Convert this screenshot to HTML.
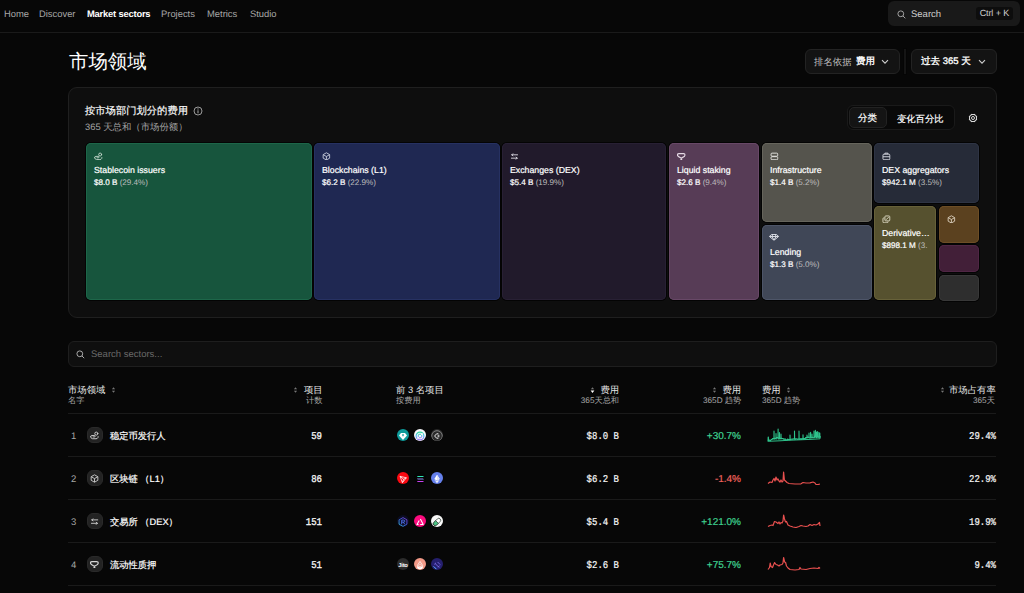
<!DOCTYPE html>
<html><head><meta charset="utf-8">
<style>
*{box-sizing:border-box;margin:0;padding:0}
html,body{text-rendering:geometricPrecision;width:1024px;height:593px;overflow:hidden;background:#070707;color:#e8e8e8;font-family:"Liberation Sans",sans-serif}
.abs{position:absolute}
.tx{position:absolute;white-space:nowrap}
.nav{position:absolute;left:0;top:0;width:1024px;height:33px;border-bottom:1px solid #1a1a1a;background:#070707}
.nav .tx{top:8.4px;font-size:9.4px;line-height:12px;color:#a8a8a8}
.nav .act{color:#fff;font-weight:bold;letter-spacing:-0.2px}
.sbox{position:absolute;left:888px;top:1px;width:132px;height:25px;border-radius:6px;background:#191919}
.kbd{position:absolute;left:87.6px;top:6.3px;width:37.6px;height:12.6px;border-radius:3px;background:#0d0d0d;font-size:9px;color:#d0d0d0;text-align:center;line-height:13.4px;letter-spacing:-0.1px}
.btn{position:absolute;top:49px;height:25px;border:1px solid #232323;border-radius:6px;background:#131313}
.card{position:absolute;left:68px;top:87px;width:929px;height:231px;border:1px solid #1f1f1f;border-radius:9px;background:#0e0e0e}
.t{position:absolute;border-radius:5px;overflow:hidden;box-shadow:0 0 0 1px #040404}
.t svg{position:absolute;left:8px;top:8.5px}
.t .nm{position:absolute;left:8px;top:22.1px;font-size:8.75px;line-height:11px;color:#fff;white-space:nowrap;-webkit-text-stroke:0.2px #fff}
.t .vl{position:absolute;left:8px;top:33.6px;font-size:8.1px;line-height:11px;color:#fff;white-space:nowrap;-webkit-text-stroke:0.2px #fff}
.t .vl i{font-style:normal;color:#bdbdbd;-webkit-text-stroke:0}
.search2{position:absolute;left:68px;top:341px;width:929px;height:26px;border:1px solid #1e1e1e;border-radius:6px;background:#0f0f0f}
.hd{position:absolute;font-size:9.35px;color:#e6e6e6;white-space:nowrap;line-height:11px}
.sub{position:absolute;font-size:8.2px;color:#a8a8a8;white-space:nowrap;line-height:10px}
.line{position:absolute;left:68px;width:928px;height:1px;background:#1a1a1a}
.num{position:absolute;left:71px;font-size:9.5px;color:#a6a6a6;line-height:11px}
.ibox{position:absolute;left:87px;width:16px;height:16px;border-radius:6px;background:#232323;border:1px solid #2a2a2a}
.ibox svg{position:absolute;left:2px;top:2.5px}
.nm2{position:absolute;left:110px;font-size:9.25px;color:#fff;-webkit-text-stroke:0.2px #fff;line-height:11px;white-space:nowrap}
.cnt{position:absolute;right:702px;font-family:"Liberation Mono",monospace;font-size:9px;color:#f4f4f4;line-height:11px;-webkit-text-stroke:0.3px #f4f4f4;transform:scaleY(1.15);transform-origin:50% 70%;margin-top:1.6px}
.lg{position:absolute;width:12.2px;height:12.2px;border-radius:50%;overflow:hidden}
.mono{font-family:"Liberation Mono",monospace}
.fee{position:absolute;right:405px;font-size:9px;color:#f4f4f4;line-height:11px;-webkit-text-stroke:0.2px #f4f4f4;transform:scaleY(1.15);transform-origin:50% 70%;margin-top:1.6px}
.chg{position:absolute;right:283px;font-size:10px;line-height:11px}
.up{color:#3fd291;-webkit-text-stroke:0.2px #3fd291}.dn{color:#f0635d;-webkit-text-stroke:0.2px #f0635d}
.sh{position:absolute;right:28px;font-size:9px;color:#f4f4f4;line-height:11px;-webkit-text-stroke:0.2px #f4f4f4;transform:scaleY(1.15);transform-origin:50% 70%;margin-top:1.6px}
.spark{position:absolute;left:766px}
</style></head><body>
<svg width="0" height="0" style="position:absolute">
<defs>
<symbol id="i-hand" viewBox="0.3 0 10 10"><g fill="none" stroke="currentColor" stroke-width="1" stroke-linecap="round" stroke-linejoin="round"><path d="M1 6.2 Q1 5 2.4 5 H5.1 Q6.1 5 6.1 5.8 Q6.1 6.6 5.1 6.6 H3.7"/><path d="M1 6.6 Q1.4 8.6 3.2 8.6 H7 Q8.4 8.6 9.1 7.4 L9.3 6.2"/><circle cx="7.3" cy="2.9" r="1.7"/></g></symbol>
<symbol id="i-cube" viewBox="0 0 10 10"><g fill="none" stroke="currentColor" stroke-width="0.95" stroke-linejoin="round"><path d="M5 0.9 L8.7 3 V7 L5 9.1 L1.3 7 V3 Z"/><path d="M1.5 3.1 L5 5.1 L8.5 3.1 M5 5.1 V9"/></g></symbol>
<symbol id="i-arrows" viewBox="0 0 10 10"><g fill="none" stroke="currentColor" stroke-width="1" stroke-linecap="round" stroke-linejoin="round"><path d="M8.6 3.2 H2 M3.2 2 L2 3.2 L3.2 4.4"/><path d="M1.6 7 H8.2 M7 5.8 L8.2 7 L7 8.2"/></g></symbol>
<symbol id="i-trophy" viewBox="0 0 10 10"><path d="M0.5 3.3 Q0.5 1.8 2.2 1.8 H7.4 Q9.2 1.8 9.2 3.3 Q9.2 5 6 6.4 L4.9 7 L3.8 6.4 Q0.5 5 0.5 3.3 Z" fill="none" stroke="currentColor" stroke-width="1.35" stroke-linejoin="round"/><path d="M3.5 9 L4.9 6.8 L6.3 9 Z" fill="currentColor"/></symbol>
<symbol id="i-server" viewBox="0 0 10 10"><g fill="none" stroke="currentColor" stroke-width="1.1"><rect x="1.2" y="1.3" width="7.6" height="3.5" rx="1.1"/><rect x="1.2" y="5.3" width="7.6" height="3.5" rx="1.1"/></g></symbol>
<symbol id="i-gem" viewBox="0 1.9 10 6.8"><g fill="none" stroke="currentColor" stroke-width="0.95" stroke-linejoin="round"><path d="M2.4 2.4 H7.6 L9.6 4.4 L5 8.2 L0.4 4.4 Z"/><path d="M0.6 4.4 H9.4 M3.6 2.4 L3 4.4 L5 8 L7 4.4 L6.4 2.4"/></g></symbol>
<symbol id="i-brief" viewBox="0 0 10 10"><g fill="none" stroke="currentColor" stroke-width="1.05"><path d="M3.3 2.4 V1.3 H6.7 V2.4"/><rect x="1.1" y="2.5" width="7.8" height="6.3" rx="1.1"/><path d="M1.2 5.4 H8.8"/></g></symbol>
<symbol id="i-copy" viewBox="0 0 10 10"><g fill="none" stroke="currentColor" stroke-width="1.05" stroke-linejoin="round"><rect x="3.3" y="1.1" width="5.6" height="5.6" rx="1"/><path d="M2.6 3.2 H2.2 Q1.1 3.2 1.1 4.3 V7.8 Q1.1 8.9 2.2 8.9 H5.7 Q6.8 8.9 6.8 7.8 V7.4"/><path d="M4.6 5.4 L7.6 2.4"/></g></symbol>
</defs></svg>
<div class="nav">
  <span class="tx" style="left:4px">Home</span>
  <span class="tx" style="left:39px">Discover</span>
  <span class="tx act" style="left:87px">Market sectors</span>
  <span class="tx" style="left:161px">Projects</span>
  <span class="tx" style="left:207px">Metrics</span>
  <span class="tx" style="left:250px">Studio</span>
  <div class="sbox">
    <svg class="abs" style="left:9px;top:9px" width="9" height="9" viewBox="0 0 9 9"><circle cx="3.8" cy="3.8" r="2.9" fill="none" stroke="#a8a8a8" stroke-width="0.95"/><path d="M6 6 L8.3 8.3" stroke="#a8a8a8" stroke-width="0.95"/></svg>
    <span class="tx" style="left:23px;top:8px;color:#d0d0d0;font-size:9.5px;line-height:12px">Search</span>
    <div class="kbd">Ctrl + K</div>
  </div>
</div>

<div class="tx" style="left:69px;top:49px;font-size:19.4px;color:#fff;line-height:26px">市场领域</div>

<div class="btn" style="left:805px;width:95px"></div>
<span class="tx" style="left:814px;top:55.5px;font-size:9.4px;line-height:12px;color:#c4c4c4">排名依据</span>
<span class="tx" style="left:856px;top:55.5px;font-size:9.5px;line-height:12px;color:#fff;-webkit-text-stroke:0.35px #fff">费用</span>
<svg class="abs" style="left:881px;top:59px" width="8" height="6" viewBox="0 0 8 6"><path d="M1 1.2 L4 4.2 L7 1.2" fill="none" stroke="#cfcfcf" stroke-width="1.1"/></svg>
<div class="abs" style="left:904px;top:49px;width:2px;height:25px;background:#151515;box-shadow:0 0 0 1px #050505"></div>
<div class="btn" style="left:911px;width:86px"></div>
<span class="tx" style="left:921px;top:55.5px;font-size:9.5px;line-height:12px;color:#fff;-webkit-text-stroke:0.35px #fff">过去 365 天</span>
<svg class="abs" style="left:978px;top:59px" width="8" height="6" viewBox="0 0 8 6"><path d="M1 1.2 L4 4.2 L7 1.2" fill="none" stroke="#cfcfcf" stroke-width="1.1"/></svg>

<div class="card"></div>
<span class="tx" style="left:85px;top:106px;font-size:10.3px;line-height:12px;color:#fff;-webkit-text-stroke:0.15px #fff">按市场部门划分的费用</span>
<svg class="abs" style="left:193px;top:106px" width="10" height="10" viewBox="0 0 10 10"><circle cx="5" cy="5" r="4" fill="none" stroke="#a8a8a8" stroke-width="0.9"/><path d="M5 4.3 V7.3" stroke="#a8a8a8" stroke-width="1"/><circle cx="5" cy="2.9" r="0.6" fill="#a8a8a8"/></svg>
<span class="tx" style="left:85px;top:120.5px;font-size:9.4px;line-height:12px;color:#a4a4a4">365 天总和（市场份额）</span>

<div class="abs" style="left:847px;top:105px;width:108px;height:25px;border-radius:6px;background:#090909;border:1px solid #1a1a1a"></div>
<div class="abs" style="left:849px;top:107px;width:38px;height:21px;border-radius:5px;background:#141414;border:1px solid #222"></div>
<span class="tx" style="left:858px;top:112.8px;font-size:9.5px;line-height:12px;color:#fff;-webkit-text-stroke:0.2px #fff">分类</span>
<span class="tx" style="left:897px;top:112.8px;font-size:9.3px;line-height:12px;color:#fff;-webkit-text-stroke:0.2px #fff">变化百分比</span>
<svg class="abs" style="left:967.6px;top:112.8px" width="10" height="10" viewBox="0 0 10 10"><polygon points="8.60,6.49 7.40,7.40 6.49,8.60 5.00,8.40 3.51,8.60 2.60,7.40 1.40,6.49 1.60,5.00 1.40,3.51 2.60,2.60 3.51,1.40 5.00,1.60 6.49,1.40 7.40,2.60 8.60,3.51 8.40,5.00" fill="none" stroke="#d8d8d8" stroke-width="1.05" stroke-linejoin="round"/><circle cx="5" cy="5" r="1.5" fill="none" stroke="#d8d8d8" stroke-width="1"/></svg>

<!-- treemap -->
<div class="t" style="left:86px;top:143px;width:226px;height:157px;background:#17553d;box-shadow:inset 0 0 0 1px #1d6649,0 0 0 1px #040404">
  <svg width="8.8" height="8.8" style="color:#c9dcd0"><use href="#i-hand"/></svg>
  <div class="nm">Stablecoin issuers</div><div class="vl">$8.0 B <i>(29.4%)</i></div>
</div>
<div class="t" style="left:314px;top:143px;width:186px;height:157px;background:#1f2852;box-shadow:inset 0 0 0 1px #263162,0 0 0 1px #040404">
  <svg width="8.8" height="8.8" style="color:#d4d8e6"><use href="#i-cube"/></svg>
  <div class="nm">Blockchains (L1)</div><div class="vl">$6.2 B <i>(22.9%)</i></div>
</div>
<div class="t" style="left:502px;top:143px;width:164px;height:157px;background:#211a2b;box-shadow:inset 0 0 0 1px #282034,0 0 0 1px #040404">
  <svg width="8.8" height="8.8" style="color:#e4e2ea"><use href="#i-arrows"/></svg>
  <div class="nm">Exchanges (DEX)</div><div class="vl">$5.4 B <i>(19.9%)</i></div>
</div>
<div class="t" style="left:669px;top:143px;width:90px;height:157px;background:#573c56;box-shadow:inset 0 0 0 1px #684867,0 0 0 1px #040404">
  <svg width="8.8" height="8.8" style="color:#e4d8e3"><use href="#i-trophy"/></svg>
  <div class="nm">Liquid staking</div><div class="vl">$2.6 B <i>(9.4%)</i></div>
</div>
<div class="t" style="left:762px;top:143px;width:110px;height:79px;background:#55544d;box-shadow:inset 0 0 0 1px #66655c,0 0 0 1px #040404">
  <svg width="8.8" height="8.8" style="color:#e2e2de"><use href="#i-server"/></svg>
  <div class="nm">Infrastructure</div><div class="vl">$1.4 B <i>(5.2%)</i></div>
</div>
<div class="t" style="left:762px;top:225px;width:110px;height:75px;background:#404757;box-shadow:inset 0 0 0 1px #4d5568,0 0 0 1px #040404">
  <svg width="10" height="6.8" style="color:#dde0e8;left:7.4px;top:9.4px"><use href="#i-gem"/></svg>
  <div class="nm">Lending</div><div class="vl">$1.3 B <i>(5.0%)</i></div>
</div>
<div class="t" style="left:874px;top:143px;width:105px;height:60px;background:#262b38;box-shadow:inset 0 0 0 1px #2e3444,0 0 0 1px #040404">
  <svg width="8.8" height="8.8" style="color:#d8dae2"><use href="#i-brief"/></svg>
  <div class="nm">DEX aggregators</div><div class="vl">$942.1 M <i>(3.5%)</i></div>
</div>
<div class="t" style="left:874px;top:206px;width:62px;height:94px;background:#56512f;box-shadow:inset 0 0 0 1px #676139,0 0 0 1px #040404">
  <svg width="8.8" height="8.8" style="color:#dedbc6"><use href="#i-copy"/></svg>
  <div class="nm">Derivative…</div><div class="vl">$898.1 M <i>(3.</i></div>
</div>
<div class="t" style="left:939px;top:206px;width:40px;height:37px;background:#5b411f;box-shadow:inset 0 0 0 1px #6d4e26,0 0 0 1px #040404">
  <svg width="8.8" height="8.8" style="color:#e6dccb"><use href="#i-cube"/></svg>
</div>
<div class="t" style="left:939px;top:245px;width:40px;height:27px;background:#421f38;box-shadow:inset 0 0 0 1px #4f2644,0 0 0 1px #040404"></div>
<div class="t" style="left:939px;top:275px;width:40px;height:26px;background:#2e2e2e;box-shadow:inset 0 0 0 1px #383838,0 0 0 1px #040404"></div>

<div class="search2"></div>
<svg class="abs" style="left:76px;top:350px" width="9" height="9" viewBox="0 0 9 9"><circle cx="3.8" cy="3.8" r="2.9" fill="none" stroke="#b0b0b0" stroke-width="0.95"/><path d="M6 6 L8.2 8.2" stroke="#b0b0b0" stroke-width="0.95"/></svg>
<span class="tx" style="left:91px;top:348.6px;font-size:9.5px;line-height:12px;color:#6a6a6a">Search sectors...</span>

<!-- table header -->
<div class="hd" style="left:68px;top:385px">市场领域</div>
<svg class="abs" style="left:111px;top:386px" width="5" height="8" viewBox="0 0 5 8"><path d="M0.9 3.2 L2.5 1.3 L4.1 3.2 Z M0.9 4.8 L2.5 6.7 L4.1 4.8 Z" fill="#777"/></svg>
<div class="sub" style="left:68px;top:396px">名字</div>
<svg class="abs" style="left:293px;top:386px" width="5" height="8" viewBox="0 0 5 8"><path d="M0.9 3.2 L2.5 1.3 L4.1 3.2 Z M0.9 4.8 L2.5 6.7 L4.1 4.8 Z" fill="#777"/></svg>
<div class="hd" style="left:304px;top:385px">项目</div>
<div class="sub" style="left:306px;top:396px">计数</div>
<div class="hd" style="left:396px;top:385px">前 3 名项目</div>
<div class="sub" style="left:396px;top:396px">按费用</div>
<svg class="abs" style="left:590px;top:386px" width="5" height="8" viewBox="0 0 5 8"><path d="M0.9 3.2 L2.5 1.3 L4.1 3.2 Z" fill="#777"/><path d="M0.6 4.6 L2.5 6.9 L4.4 4.6 Z" fill="#fff"/></svg>
<div class="hd" style="left:600.5px;top:385px">费用</div>
<div class="sub" style="left:580.8px;top:396px">365天总和</div>
<svg class="abs" style="left:712px;top:386px" width="5" height="8" viewBox="0 0 5 8"><path d="M0.9 3.2 L2.5 1.3 L4.1 3.2 Z M0.9 4.8 L2.5 6.7 L4.1 4.8 Z" fill="#777"/></svg>
<div class="hd" style="left:722.5px;top:385px">费用</div>
<div class="sub" style="left:703px;top:396px">365D 趋势</div>
<div class="hd" style="left:762px;top:385px">费用</div>
<svg class="abs" style="left:786px;top:386px" width="5" height="8" viewBox="0 0 5 8"><path d="M0.9 3.2 L2.5 1.3 L4.1 3.2 Z M0.9 4.8 L2.5 6.7 L4.1 4.8 Z" fill="#777"/></svg>
<div class="sub" style="left:762px;top:396px">365D 趋势</div>
<svg class="abs" style="left:940px;top:386px" width="5" height="8" viewBox="0 0 5 8"><path d="M0.9 3.2 L2.5 1.3 L4.1 3.2 Z M0.9 4.8 L2.5 6.7 L4.1 4.8 Z" fill="#777"/></svg>
<div class="hd" style="left:949px;top:385px">市场占有率</div>
<div class="sub" style="left:973px;top:396px">365天</div>
<div class="line" style="top:413px"></div>

<!-- row 1 -->
<div class="num" style="top:430.5px">1</div>
<div class="ibox" style="top:427px"><svg width="9" height="9" style="color:#d6d6d6"><use href="#i-hand"/></svg></div>
<div class="nm2" style="top:430.5px">稳定币发行人</div>
<div class="cnt" style="top:430.5px">59</div>
<div class="lg" style="left:397px;top:429px;background:#0e9b9b"><svg width="12" height="12" viewBox="0 0 12 12"><path d="M4 3.1 H8 L10 5.5 L6 9.9 L2 5.5 Z" fill="#fff"/><path d="M4.9 4.6 L6 3.9 L7.1 4.6 L6.6 6.2 H5.4 Z" fill="#0e9b9b" opacity="0.8"/></svg></div>
<div class="lg" style="left:414px;top:429px;background:#f7f7fa"><svg width="12" height="12" viewBox="0 0 12 12"><defs><linearGradient id="cg" x1="0" y1="0" x2="0" y2="1"><stop offset="0" stop-color="#2fd9a0"/><stop offset="0.5" stop-color="#4fb6f5"/><stop offset="1" stop-color="#a67af4"/></linearGradient></defs><circle cx="6" cy="6" r="3.9" fill="none" stroke="url(#cg)" stroke-width="1.2"/><circle cx="6" cy="6" r="1.9" fill="none" stroke="url(#cg)" stroke-width="1"/><path d="M3.4 8.6 L8.6 3.4" stroke="#f7f7fa" stroke-width="0.9"/></svg></div>
<div class="lg" style="left:431px;top:429px;background:#2a2a2a"><svg width="12" height="12" viewBox="0 0 12 12"><circle cx="6" cy="6" r="5.3" fill="none" stroke="#8a8a8a" stroke-width="0.9"/><path d="M7.4 3.8 H5.6 L3.6 6 L5.6 8.2 H7.4" fill="none" stroke="#fff" stroke-width="0.9"/><path d="M6.6 5.3 H8.4 M6.6 6.7 H8.4" stroke="#fff" stroke-width="0.8"/></svg></div>
<div class="fee mono" style="top:430.5px">$8.0 B</div>
<div class="chg up" style="top:430.5px">+30.7%</div>
<svg class="spark" style="top:426px" width="56" height="16" viewBox="766 426 56 16"><polyline fill="none" stroke="#2ec38b" stroke-width="1.1" stroke-linejoin="round" points="767.50,440.56 768.00,440.24 768.05,440.24 768.20,437.00 768.35,437.00 768.50,440.39 769.00,440.14 769.50,440.10 770.00,440.64 770.50,440.67 771.00,439.83 771.50,439.53 772.00,439.42 772.50,438.51 773.00,438.90 773.50,438.39 773.85,438.39 774.00,438.61 774.00,431.00 774.15,439.25 774.50,438.31 775.00,438.65 775.50,438.03 775.85,438.03 776.00,437.65 776.00,433.50 776.15,439.17 776.50,437.86 777.00,437.50 777.50,437.67 777.95,437.67 778.00,438.38 778.10,429.00 778.25,439.09 778.50,437.79 779.00,438.06 779.35,438.06 779.50,438.45 779.50,432.50 779.65,439.04 780.00,438.83 780.50,438.10 780.85,438.10 781.00,438.59 781.00,434.00 781.15,438.98 781.50,438.45 782.00,438.39 782.50,438.66 783.00,438.56 783.50,439.19 784.00,438.88 784.50,439.34 785.00,438.96 785.50,439.12 786.00,440.00 786.50,439.94 787.00,439.84 787.50,439.08 788.00,439.59 788.50,439.38 789.00,439.68 789.50,439.46 789.85,439.46 790.00,439.56 790.00,435.00 790.15,438.64 790.50,439.58 791.00,439.32 791.50,439.30 792.00,438.97 792.50,439.17 793.00,438.90 793.50,438.96 794.00,438.80 794.35,438.80 794.50,439.10 794.50,431.00 794.65,438.47 795.00,439.59 795.50,438.88 796.00,438.75 796.50,438.79 797.00,439.11 797.50,438.95 798.00,439.43 798.50,438.79 798.85,438.79 799.00,439.03 799.00,431.00 799.15,438.30 799.50,439.30 800.00,439.50 800.50,438.69 801.00,438.54 801.50,439.42 802.00,438.69 802.50,439.06 802.85,439.06 803.00,439.30 803.00,434.70 803.15,438.15 803.50,439.14 804.00,438.65 804.50,438.52 805.00,439.33 805.50,437.54 806.00,438.09 806.50,437.40 806.85,437.40 807.00,437.77 807.00,435.00 807.15,438.00 807.50,437.20 808.00,437.08 808.50,437.54 808.85,437.54 809.00,437.03 809.00,433.00 809.15,437.92 809.50,437.70 810.00,437.91 810.45,437.91 810.50,437.37 810.60,432.30 810.75,437.86 811.00,437.92 811.50,437.73 811.85,437.73 812.00,437.50 812.00,434.00 812.15,437.81 812.50,437.28 813.00,437.72 813.50,437.81 813.85,437.81 814.00,436.97 814.00,431.00 814.15,437.73 814.50,437.50 815.00,436.84 815.25,436.84 815.40,430.30 815.50,436.88 815.55,436.88 816.00,437.38 816.35,437.38 816.50,437.28 816.50,432.00 816.65,437.63 817.00,437.20 817.25,437.20 817.40,431.50 817.50,437.06 817.55,437.06 818.00,437.09 818.50,437.11 818.65,437.11 818.80,432.30 818.95,437.55 819.00,437.03 819.50,436.69 819.65,436.69 819.80,433.00 819.95,437.51 820.00,437.10"/><polyline fill="none" stroke="#2ec38b" stroke-width="1" points="767.6,441.3 780,440.8 790,440.2 800,439.8 810,439.4 820,438.8 820.2,436"/></svg>
<div class="sh mono" style="top:430.5px">29.4%</div>
<div class="line" style="top:456px"></div>

<!-- row 2 -->
<div class="num" style="top:473.5px">2</div>
<div class="ibox" style="top:470px"><svg width="9" height="9" style="color:#d6d6d6"><use href="#i-cube"/></svg></div>
<div class="nm2" style="top:473.5px">区块链 （L1）</div>
<div class="cnt" style="top:473.5px">86</div>
<div class="lg" style="left:397px;top:472px;background:#fb0a12"><svg width="12" height="12" viewBox="0 0 12 12"><path d="M3 3.3 L9.4 4.8 L5.4 9.6 Z M3 3.3 L6.6 6.2 L9.4 4.8 M6.6 6.2 L5.4 9.6" fill="none" stroke="#fff" stroke-width="0.75" stroke-linejoin="round"/></svg></div>
<div class="lg" style="left:414px;top:472px;background:#050505"><svg width="12" height="12" viewBox="0 0 12 12"><defs><linearGradient id="sg" x1="0" y1="0" x2="0" y2="1"><stop offset="0" stop-color="#28e0b0"/><stop offset="0.5" stop-color="#8a7cf0"/><stop offset="1" stop-color="#c63cf0"/></linearGradient></defs><path d="M3.8 3.1 H10 L9 4.1 H2.8 Z" fill="#2ee6b6"/><path d="M2.8 5.6 H9 L10 6.6 H3.8 Z" fill="#8c8cf2"/><path d="M3.8 8.1 H10 L9 9.1 H2.8 Z" fill="#c840f2"/></svg></div>
<div class="lg" style="left:431px;top:472px;background:#6580ec"><svg width="12" height="12" viewBox="0 0 12 12"><path d="M6 1.8 L8.7 6.1 L6 7.7 L3.3 6.1 Z" fill="#fff"/><path d="M3.3 6.7 L6 8.3 L8.7 6.7 L6 10.3 Z" fill="#fff" opacity="0.9"/><path d="M6 1.8 V7.7 L8.7 6.1 Z" fill="#dfe4fb"/></svg></div>
<div class="fee mono" style="top:473.5px">$6.2 B</div>
<div class="chg dn" style="top:473.5px">-1.4%</div>
<svg class="spark" style="top:469px" width="56" height="16" viewBox="766 469 56 16"><polyline fill="none" stroke="#e8504f" stroke-width="1.2" stroke-linejoin="round" points="768,483.5 770,482 772,482.5 773,480 774,478.5 775,481 776,477 777,480 778,479 779,481 780,482 781,480 782,482 783,481 783.6,472 784.4,480 785.5,481 787,482.5 789,483.5 795,484 801,483.8 803,482.5 806,483 810,482.8 813,482 815,483 816,484.5 818,484.5 820,484"/></svg>
<div class="sh mono" style="top:473.5px">22.9%</div>
<div class="line" style="top:499px"></div>

<!-- row 3 -->
<div class="num" style="top:516.5px">3</div>
<div class="ibox" style="top:513px"><svg width="9" height="9" style="color:#d6d6d6"><use href="#i-arrows"/></svg></div>
<div class="nm2" style="top:516.5px">交易所 （DEX）</div>
<div class="cnt" style="top:516.5px">151</div>
<div class="lg" style="left:397px;top:515px;background:#0c0d22"><svg width="12" height="12" viewBox="0 0 12 12"><defs><linearGradient id="rg" x1="0" y1="1" x2="1" y2="0"><stop offset="0" stop-color="#35c4d8"/><stop offset="0.5" stop-color="#3b5ce0"/><stop offset="1" stop-color="#8a3ee0"/></linearGradient></defs><path d="M6 1.6 L9.9 3.8 V8.2 L6 10.4 L2.1 8.2 V3.8 Z" fill="none" stroke="url(#rg)" stroke-width="0.9"/><path d="M4.7 8.3 V4.1 H6.8 Q7.8 4.1 7.8 5.1 Q7.8 6.1 6.8 6.1 H4.7 M6.4 6.1 L7.7 8.3" fill="none" stroke="#4f74f0" stroke-width="0.9"/></svg></div>
<div class="lg" style="left:414px;top:515px;background:#fc0b7e"><svg width="12" height="12" viewBox="0 0 12 12"><path d="M6.4 3 L9.2 8.4 H6.2 M4.6 8.4 H3 L5.2 4.4" fill="none" stroke="#fff" stroke-width="1.05" stroke-linejoin="round"/></svg></div>
<div class="lg" style="left:431px;top:515px;background:#f8f8f8"><svg width="12" height="12" viewBox="0 0 12 12"><g transform="rotate(-45 6 6)"><rect x="1.6" y="4.1" width="8.8" height="3.8" rx="1.9" fill="#fff" stroke="#2d3a33" stroke-width="0.7"/><path d="M6 4.1 H3.5 A1.9 1.9 0 0 0 3.5 7.9 H6 Z" fill="#4cc383" stroke="#2d3a33" stroke-width="0.7"/></g></svg></div>
<div class="fee mono" style="top:516.5px">$5.4 B</div>
<div class="chg up" style="top:516.5px">+121.0%</div>
<svg class="spark" style="top:512px" width="56" height="16" viewBox="766 512 56 16"><polyline fill="none" stroke="#e8504f" stroke-width="1.2" stroke-linejoin="round" points="768,526.5 770,525.5 772,525 773,525.5 774.5,521.5 776,522 778,523.5 779,522 780,524 781,522.5 782,523 783,521 783.6,515 784.5,519 785.5,522 786.5,521.5 788,525 790,526 793,527 796,527.5 799,526.5 801,525.5 803,526 806,526.5 808,526 810,524.5 812,525.5 814,524.5 816,525 818,524 819.5,522.5 820,526"/></svg>
<div class="sh mono" style="top:516.5px">19.9%</div>
<div class="line" style="top:542px"></div>

<!-- row 4 -->
<div class="num" style="top:559.5px">4</div>
<div class="ibox" style="top:556px"><svg width="9" height="9" style="color:#d6d6d6"><use href="#i-trophy"/></svg></div>
<div class="nm2" style="top:559.5px">流动性质押</div>
<div class="cnt" style="top:559.5px">51</div>
<div class="lg" style="left:397px;top:558px;background:#2c2c2c"><svg width="12" height="12" viewBox="0 0 12 12"><text x="6" y="7.9" text-anchor="middle" font-family="Liberation Sans" font-weight="bold" font-size="5.8" fill="#fff" letter-spacing="-0.25">Jito</text></svg></div>
<div class="lg" style="left:414px;top:558px;background:#f39a88"><svg width="12" height="12" viewBox="0 0 12 12"><path d="M6 2.4 L8.6 6.4 L6 7.6 L3.4 6.4 Z" fill="none" stroke="#fff" stroke-width="0.7"/><circle cx="6" cy="5.3" r="0.6" fill="#fff"/><path d="M3.1 7 L6 8.4 L8.9 7 Q9.2 10.2 6 10.2 Q2.8 10.2 3.1 7 Z" fill="#fff"/></svg></div>
<div class="lg" style="left:431px;top:558px;background:#251f6e"><svg width="12" height="12" viewBox="0 0 12 12"><path d="M2.8 7.6 L5.2 10 M4.2 4.6 L8.2 8.6 M6.6 3 L9.2 5.6 M5 3.8 L3.4 5.4 M8.6 6.6 L7 8.2" stroke="#7f6fe8" stroke-width="0.9"/><path d="M2.6 7.4 L5.4 10.2" stroke="#3fa0e8" stroke-width="1"/></svg></div>
<div class="fee mono" style="top:559.5px">$2.6 B</div>
<div class="chg up" style="top:559.5px">+75.7%</div>
<svg class="spark" style="top:555px" width="56" height="16" viewBox="766 555 56 16"><polyline fill="none" stroke="#e8504f" stroke-width="1.2" stroke-linejoin="round" points="768,569.5 769.5,567.5 770.2,563 771,566.5 772.5,567.5 773.5,565 774.6,562.5 776,564.5 777.5,565 779,566 780,565 782,564.5 783,563 783.6,557.5 784.6,562 785.6,562.5 786.5,566 788,568 790,569.5 795,570 799,569.5 800,567.5 801,569 806,569.5 810,568.5 814,568 818,568.5 819,567.5 820,568.5"/></svg>
<div class="sh mono" style="top:559.5px">9.4%</div>
<div class="line" style="top:585px"></div>
</body></html>
